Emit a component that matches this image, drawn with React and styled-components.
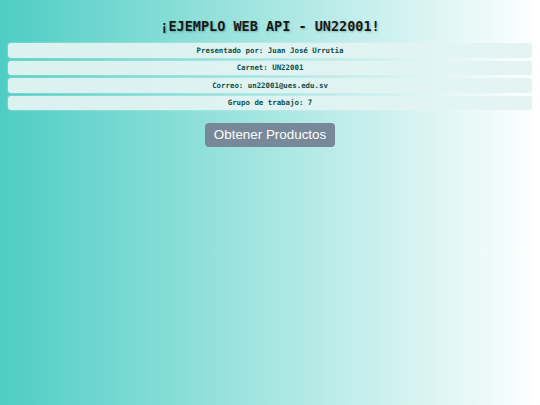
import React from 'react'
import styled, { createGlobalStyle } from 'styled-components'

const GlobalStyle = createGlobalStyle`
  html, body {
    margin: 0;
    padding: 0;
  }
  body {
    min-height: 100vh;
    background: linear-gradient(to right, #4ecdc4, #ffffff);
    font-family: "DejaVu Sans Mono", monospace;
  }
`

const info = [
  'Presentado por: Juan José Urrutia',
  'Carnet: UN22001',
  'Correo: un22001@ues.edu.sv',
  'Grupo de trabajo: 7',
]

const App = () => {
  return (
    <React.Fragment>
      <GlobalStyle />
      <Wrap>
        <Title>¡EJEMPLO WEB API - UN22001!</Title>
        <InfoList>
          {info.map((line) => (
            <InfoRow key={line}>{line}</InfoRow>
          ))}
        </InfoList>
        <ButtonArea>
          <FetchButton>Obtener Productos</FetchButton>
        </ButtonArea>
      </Wrap>
    </React.Fragment>
  )
}

const Wrap = styled.div`
  min-height: 100vh;
  box-sizing: border-box;
  padding: 18px 8px 0px 8px;
  display: flex;
  flex-direction: column;
`

const Title = styled.h1`
  margin: 0px 0px 9px 0px;
  font-family: "DejaVu Sans Mono", monospace;
  font-size: 13.5px;
  line-height: 16px;
  font-weight: bold;
  text-align: center;
  color: #141a1a;
  text-shadow: 1px 1px 2px rgba(0, 0, 0, 0.25);
`

const InfoList = styled.div`
  display: flex;
  flex-direction: column;
  gap: 3px;
`

const InfoRow = styled.div`
  height: 14.5px;
  display: flex;
  align-items: center;
  justify-content: center;
  background: rgba(226, 243, 242, 0.95);
  border-radius: 3px;
  box-shadow: 0px 0px 2px rgba(255, 255, 255, 0.6);
  font-family: "DejaVu Sans Mono", monospace;
  font-size: 7.4px;
  font-weight: bold;
  color: #0e4f4c;
`

const ButtonArea = styled.div`
  display: flex;
  justify-content: center;
  margin-top: 12.5px;
`

const FetchButton = styled.button`
  height: 24px;
  padding: 0px 8.5px;
  border: none;
  border-radius: 4px;
  background-color: #778899;
  color: #ffffff;
  font-family: "Liberation Sans", Arial, sans-serif;
  font-size: 13.4px;
  cursor: pointer;
`

export default App
